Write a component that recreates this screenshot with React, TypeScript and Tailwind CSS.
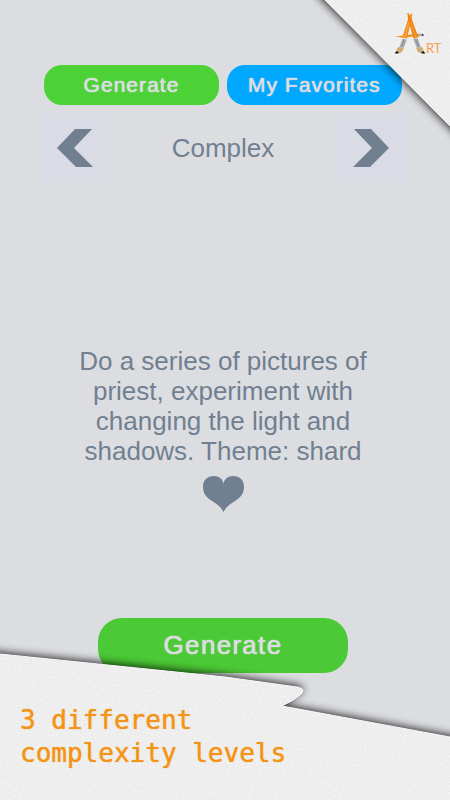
import { useState } from "react";

const LEVELS = ["Complex", "Simple", "Medium"];

const PAPER_EDGE = "M0 14 L225 37 L290 46 Q302 47 303 50 Q304 55 282 66 L450 97";
const CORNER_EDGE = "M25 0 L150 126";

// grain shared by the paper sheets
function PaperFilters() {
  return (
    <svg className="absolute h-0 w-0" aria-hidden="true">
      <defs>
        <filter id="grain" x="0" y="0" width="100%" height="100%" colorInterpolationFilters="sRGB">
          <feTurbulence type="fractalNoise" baseFrequency="0.8" numOctaves="2" seed="4" result="noise" />
          <feColorMatrix
            in="noise"
            type="matrix"
            values="0.09 0 0 0 0.889  0.09 0 0 0 0.889  0.09 0 0 0 0.889  0 0 0 0 1"
            result="tone"
          />
          <feComposite in="tone" in2="SourceGraphic" operator="in" />
        </filter>
        <filter id="soft" x="-20%" y="-30%" width="140%" height="160%">
          <feGaussianBlur stdDeviation="4" />
        </filter>
      </defs>
    </svg>
  );
}

function BrushLogo() {
  return (
    <svg viewBox="252 36 96 126" className="h-[42px] w-8" aria-hidden="true">
      {/* crossbar brush */}
      <path d="M256 110 L280 106 L316 102 L318 109 L280 113 Z" fill="#f39220" />
      <path d="M312 101 L329 101 L329 109 L312 110 Z" fill="#9aa0a8" />
      <path d="M327 101 Q335 98 340 105 Q334 111 327 109 Z" fill="#d8b47a" />
      <circle cx="338" cy="105" r="3" fill="#2418c8" />
      {/* handles */}
      <path d="M304 40 L307 41 L304 60 L291 116 L277 112 L294 58 Z" fill="#f39220" />
      <path d="M292 40 L295 39 L304 54 L325 111 L311 116 L295 62 Z" fill="#ee8412" />
      <path d="M297 66 L284 112" stroke="#fbb45c" strokeWidth="2" />
      <path d="M302 66 L318 112" stroke="#fbb45c" strokeWidth="2" />
      {/* ferrules */}
      <path d="M277 116 L290 119 L281 144 L269 141 Z" fill="#a4a8ae" />
      <path d="M310 118 L323 115 L332 140 L321 144 Z" fill="#a4a8ae" />
      <path d="M283 118 L274 142 M317 118 L326 141" stroke="#7c8188" strokeWidth="2" />
      {/* bristles */}
      <path d="M267 140 L281 145 Q281 161 257 160 Q262 154 260 149 Q262 142 267 140 Z" fill="#d2ad73" />
      <path d="M260 153 L267 158 Q263 162 254 160 Z" fill="#15120f" />
      <path d="M333 140 L319 145 Q320 161 343 160 Q340 154 340 149 Q338 142 333 140 Z" fill="#d2ad73" />
      <path d="M340 153 L333 158 Q338 162 346 160 Z" fill="#15120f" />
    </svg>
  );
}

function Corner() {
  return (
    <div className="pointer-events-none absolute right-0 top-0 h-[150px] w-[150px]">
      <svg viewBox="0 0 150 150" className="absolute inset-0 h-full w-full overflow-visible" aria-hidden="true">
        <path d="M12 -10 L160 139 L160 -10 Z" fill="#000" opacity="0.75" filter="url(#soft)" />
        <path d="M25 0 L150 126 L150 0 Z" fill="#eee" filter="url(#grain)" />
        <path d={CORNER_EDGE} stroke="#fafafa" strokeWidth="1" />
      </svg>
      <div className="relative flex items-end pl-[94px] pt-3">
        <BrushLogo />
        <span className="font-['Lato'] text-[13px] leading-3 text-[#f5a052]">RT</span>
      </div>
    </div>
  );
}

function Caption() {
  return (
    <footer className="absolute inset-x-0 bottom-0 h-40">
      <svg
        viewBox="0 0 450 160"
        preserveAspectRatio="none"
        className="pointer-events-none absolute inset-0 h-full w-full overflow-visible"
        aria-hidden="true"
      >
        <g transform="translate(0 -2)">
          <path d={`${PAPER_EDGE} L470 100 L470 180 L-20 180 L-20 12 Z`} fill="#000" opacity="0.8" filter="url(#soft)" />
        </g>
        <path d={`${PAPER_EDGE} L450 160 L0 160 Z`} fill="#eee" filter="url(#grain)" />
        <path d={PAPER_EDGE} fill="none" stroke="#fafafa" strokeWidth="1" />
      </svg>
      <p className="relative px-5 pt-16 font-['DejaVu_Sans_Mono',monospace] text-[26px] leading-[33px] text-[#f39419] [text-shadow:0_0_1px_#f39419]">
        3 different
        <br />
        complexity levels
      </p>
    </footer>
  );
}

const label = "tracking-wider text-[#dcdde1] [text-shadow:0_0_1px_#dcdde1,0_0_1px_#dcdde1]";
const tab = `h-10 flex-1 rounded-[18px] text-[21px] ${label}`;
const arrow = "flex h-[70px] w-[70px] items-center justify-center bg-[#dadbe4]";

export default function App() {
  const [level, setLevel] = useState(0);
  const [liked, setLiked] = useState(true);

  const step = (by: number) => setLevel((level + by + LEVELS.length) % LEVELS.length);

  return (
    <div className="relative min-h-screen overflow-hidden bg-[#dcdde1] font-['Liberation_Sans',sans-serif] text-[#708090]">
      <PaperFilters />

      <main className="flex min-h-screen flex-col pb-[127px] pl-10 pr-11 pt-[65px]">
        <nav className="flex gap-2 px-1">
          <button className={`${tab} bg-[#4cd137]`}>Generate</button>
          <button className={`${tab} bg-[#00a8ff]`}>My Favorites</button>
        </nav>

        <div className="mt-2 flex items-center justify-between text-[26px]">
          <button className={arrow} aria-label="Previous level" onClick={() => step(-1)}>
            <svg viewBox="0 0 36 38" className="h-[38px] w-9" fill="currentColor" aria-hidden="true">
              <path d="M18 0 H35 L17 19 L36 38 H19 L0 19 Z" />
            </svg>
          </button>
          <span>{LEVELS[level]}</span>
          <button className={arrow} aria-label="Next level" onClick={() => step(1)}>
            <svg viewBox="0 0 36 38" className="h-[38px] w-9" fill="currentColor" aria-hidden="true">
              <path d="M18 0 H1 L19 19 L0 38 H17 L36 19 Z" />
            </svg>
          </button>
        </div>

        <div className="flex flex-1 flex-col items-center justify-end">
          <p className="w-[300px] text-center text-[26px] leading-[30px]">
            Do a series of pictures of priest, experiment with changing the light and shadows. Theme: shard
          </p>
          <button className="mt-2.5" aria-label="Favorite" aria-pressed={liked} onClick={() => setLiked(!liked)}>
            <svg viewBox="0 0 41 36" className="h-9 w-[41px]" fill="currentColor" aria-hidden="true">
              <path d="M20.500 8 C20 3 16 0 11 0 C4 0 0 4 0 11 C0 18 4 22 9 25 C14 28 18 31 20.500 36 C23 31 27 28 32 25 C37 22 41 18 41 11 C41 4 37 0 30 0 C25 0 21 3 20.500 8 Z" />
            </svg>
          </button>
          <button className={`mt-[106px] h-[55px] w-[250px] rounded-3xl bg-[#4cc936] text-[26px] ${label}`}>
            Generate
          </button>
        </div>
      </main>

      <Corner />
      <Caption />
    </div>
  );
}
